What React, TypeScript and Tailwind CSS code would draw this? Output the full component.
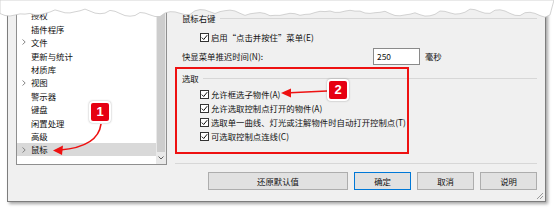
import React from 'react';

const font = { fontFamily: '"Noto Sans CJK SC", "Liberation Sans", sans-serif' };

const treeItems = [
  { label: '授权', arrow: false },
  { label: '插件程序', arrow: false },
  { label: '文件', arrow: true },
  { label: '更新与统计', arrow: false },
  { label: '材质库', arrow: false },
  { label: '视图', arrow: true },
  { label: '警示器', arrow: false },
  { label: '键盘', arrow: false },
  { label: '闲置处理', arrow: false },
  { label: '高级', arrow: false },
  { label: '鼠标', arrow: true, selected: true },
];

const selectOptions = [
  '允许框选子物件(A)',
  '允许选取控制点打开的物件(A)',
  '选取单一曲线、灯光或注解物件时自动打开控制点(T)',
  '可选取控制点连线(C)',
];

// torn paper edge along the top
const tornPoints = (() => {
  const pts: string[] = ['0,0'];
  for (let x = 0; x <= 554; x += 5) {
    const y = 13 + Math.sin(x * 0.21) * 1.6 + Math.sin(x * 0.047 + 1) * 1.8 + ((x * 7) % 11) / 5 - 1;
    pts.push(`${x},${y.toFixed(1)}`);
  }
  pts.push('554,0');
  return pts.join(' ');
})();

const Check = () => (
  <span className="w-[9px] h-[9px] border border-[#333] bg-white flex items-center justify-center shrink-0">
    <svg width="7" height="7" viewBox="0 0 7 7">
      <path d="M0.8 3.6 L2.7 5.5 L6.2 1.2" fill="none" stroke="#111" strokeWidth="1" />
    </svg>
  </span>
);

const CheckRow = ({ label }: { label: string }) => (
  <div className="h-[14px] flex items-center ml-[25px] gap-[2px]">
    <Check />
    <span>{label}</span>
  </div>
);

const GroupHeader = ({ label }: { label: string }) => (
  <div className="h-[14px] flex items-center ml-[7px]">
    <span>{label}</span>
    <div className="flex-1 h-px bg-[#d7d7d7] ml-[4px]" />
  </div>
);

const Badge = ({ n, className }: { n: string; className: string }) => (
  <div
    className={`absolute w-[22px] h-[22px] bg-[#e60012] border-2 border-white rounded-[4px] shadow-[0_0_2px_rgba(0,0,0,0.35)] flex items-center justify-center text-white text-[13px] font-bold ${className}`}
    style={{ fontFamily: '"Liberation Sans", sans-serif' }}
  >
    {n}
  </div>
);

export default function App() {
  return (
    <div className="relative w-[554px] h-[209px] bg-white overflow-hidden text-[8.4px] text-[#111]" style={font}>
      <div className="ml-[7px] w-[539px] h-[202px] bg-[#f0f0f0] border-l border-r border-b border-[#7d7d7d] shadow-[2px_2px_3px_rgba(0,0,0,0.35)] flex">
        {/* tree */}
        <div className="ml-[8px] w-[151px] h-[165px] bg-white border border-t-0 border-[#8f8f8f] flex">
          <div className="flex-1 flex flex-col pt-[9px]">
            {treeItems.map((it) => (
              <div
                key={it.label}
                className={`h-[13.4px] flex items-center ${it.selected ? 'bg-[#d9d9d9]' : ''}`}
              >
                <span className="w-[14px] pl-[5px] flex items-center">
                  {it.arrow && (
                    <svg width="4" height="6" viewBox="0 0 4 6">
                      <path d="M0.5 0.5 L3.2 3 L0.5 5.5" fill="none" stroke="#7a7a7a" strokeWidth="0.9" />
                    </svg>
                  )}
                </span>
                <span>{it.label}</span>
              </div>
            ))}
          </div>
          <div className="w-[10px] flex flex-col bg-[#e9e9e9]">
            <div className="flex-1 bg-[#cdcdcd] mx-px" />
            <div className="h-[12px] flex items-center justify-center">
              <svg width="6" height="4" viewBox="0 0 6 4">
                <path d="M0.5 0.5 L3 3 L5.5 0.5" fill="none" stroke="#606060" strokeWidth="1" />
              </svg>
            </div>
          </div>
        </div>

        {/* right panel */}
        <div className="w-[370px] pl-[8px] flex flex-col">
          <div className="mt-[11px]">
            <GroupHeader label="鼠标右键" />
          </div>
          <div className="mt-[5px]">
            <CheckRow label="启用“点击并按住”菜单(E)" />
          </div>
          <div className="mt-[4px] h-[17px] flex items-center ml-[7px]">
            <span className="w-[191px]">快显菜单推迟时间(N):</span>
            <div className="w-[47px] h-[17px] bg-white border border-[#8a8a8a] flex items-center pl-[3px]">250</div>
            <span className="ml-[5px]">毫秒</span>
          </div>
          <div className="mt-[6px]">
            <GroupHeader label="选取" />
          </div>
          <div className="mt-[2px] flex flex-col">
            {selectOptions.map((o) => (
              <CheckRow key={o} label={o} />
            ))}
          </div>
          <div className="mt-[20px] h-px bg-[#d7d7d7]" />
          <div className="mt-[8px] flex justify-end gap-[6px]">
            <button className="w-[140px] h-[18px] bg-[#e1e1e1] border border-[#adadad]">还原默认值</button>
            <button className="w-[57px] h-[18px] bg-[#e1e1e1] border border-[#0078d7]">确定</button>
            <button className="w-[57px] h-[18px] bg-[#e1e1e1] border border-[#adadad]">取消</button>
            <button className="w-[57px] h-[18px] bg-[#e1e1e1] border border-[#adadad]">说明</button>
          </div>
        </div>
      </div>

      {/* resize grip */}
      <svg className="absolute left-[535px] top-[191px]" width="9" height="9" viewBox="0 0 9 9">
        <path d="M8 2 L2 8 M8 5 L5 8 M8 8 L8 8" stroke="#9a9a9a" strokeWidth="1" />
      </svg>

      {/* torn edge */}
      <svg className="absolute left-0 top-0" width="554" height="24" viewBox="0 0 554 24">
        <polygon points={tornPoints} fill="#fff" stroke="#c8c8c8" strokeWidth="0.8" />
      </svg>

      {/* annotations */}
      <div className="absolute left-[175px] top-[67px] w-[234px] h-[87px] border-2 border-[#ee1111]" />
      <svg className="absolute left-0 top-0 pointer-events-none" width="554" height="209" viewBox="0 0 554 209">
        <path d="M101 124 C 99 140, 84 148, 60 150" fill="none" stroke="#ee1111" strokeWidth="1.6" />
        <polygon points="53,150.5 63,145.5 62,155" fill="#ee1111" />
        <path d="M327 91 L290 92.8" fill="none" stroke="#ee1111" strokeWidth="1.6" />
        <polygon points="281,93 291,88.5 291,97.5" fill="#ee1111" />
      </svg>
      <Badge n="1" className="left-[89px] top-[101px]" />
      <Badge n="2" className="left-[327px] top-[79px]" />
    </div>
  );
}
